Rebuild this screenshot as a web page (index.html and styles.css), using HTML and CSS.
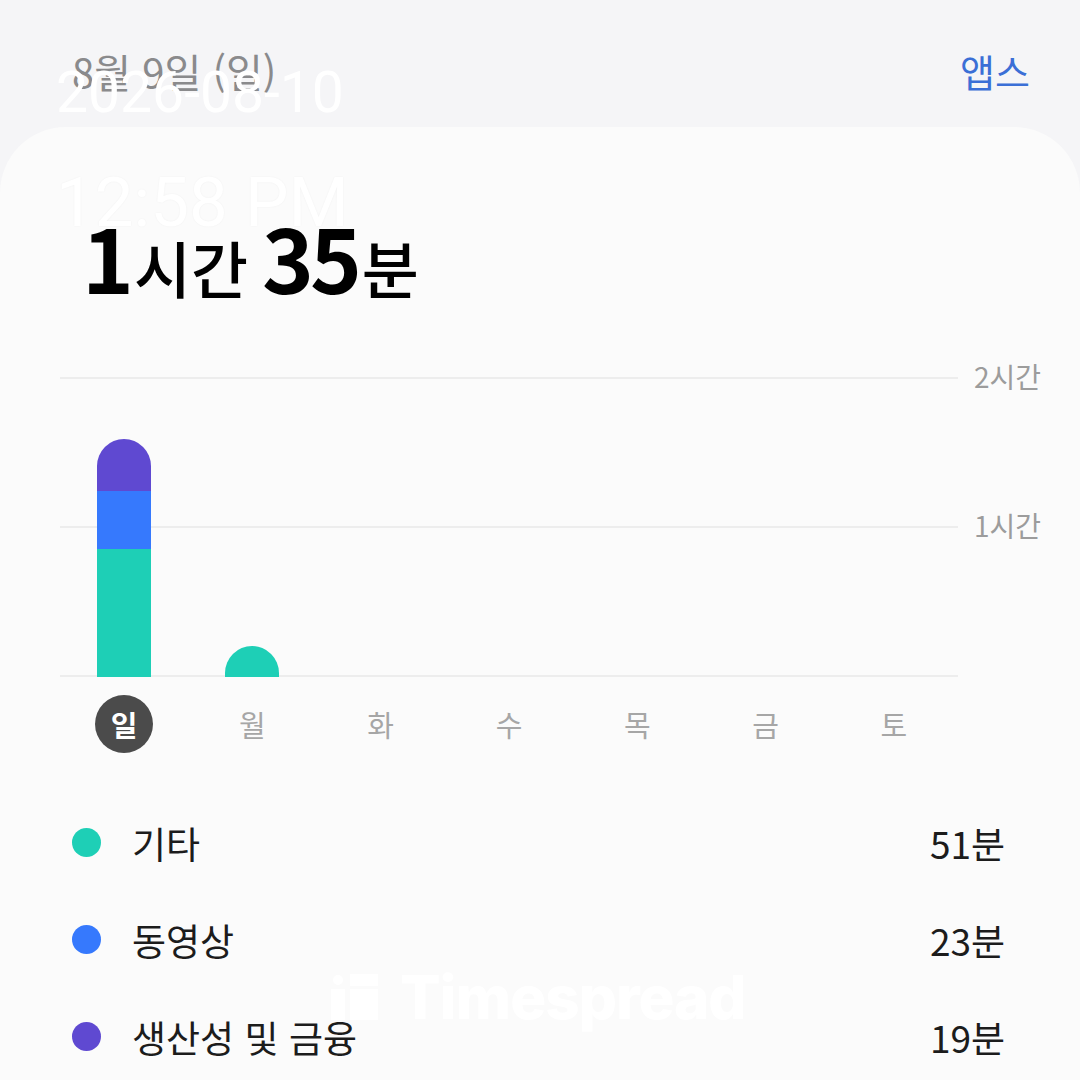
FILE: index.html
```html
<!DOCTYPE html>
<html lang="ko">
<head>
    <meta charset="UTF-8">
    <meta name="viewport" content="width=device-width, initial-scale=1.0">
    <title>디지털 웰빙 - 스크린 타임</title>
    <link rel="stylesheet" href="styles.css">
</head>
<body>
    <header class="top-bar">
        <span class="date">8월 9일 (일)</span>
        <a class="apps-link" href="#">앱스</a>
    </header>

    <main class="card">
        <h1 class="total">
            <span class="num">1</span><span class="unit">시간</span>
            <span class="num">35</span><span class="unit">분</span>
        </h1>

        <!-- 주간 차트 -->
        <div class="chart">
            <div class="plot">
                <div class="col">
                    <div class="bar">
                        <div class="seg seg-finance" style="height: 52px"></div>
                        <div class="seg seg-video" style="height: 58px"></div>
                        <div class="seg seg-etc" style="height: 128px"></div>
                    </div>
                </div>
                <div class="col">
                    <div class="bar">
                        <div class="seg seg-etc" style="height: 31px"></div>
                    </div>
                </div>
                <div class="col"></div>
                <div class="col"></div>
                <div class="col"></div>
                <div class="col"></div>
                <div class="col"></div>
            </div>
            <div class="axis">
                <span class="axis-label first">2시간</span>
                <span class="axis-label">1시간</span>
            </div>
        </div>

        <div class="days">
            <span class="day active">일</span>
            <span class="day">월</span>
            <span class="day">화</span>
            <span class="day">수</span>
            <span class="day">목</span>
            <span class="day">금</span>
            <span class="day">토</span>
        </div>

        <!-- 카테고리 목록 -->
        <ul class="legend">
            <li class="legend-row">
                <span class="dot seg-etc"></span>
                <span class="legend-name">기타</span>
                <span class="legend-time">51분</span>
            </li>
            <li class="legend-row">
                <span class="dot seg-video"></span>
                <span class="legend-name">동영상</span>
                <span class="legend-time">23분</span>
            </li>
            <li class="legend-row">
                <span class="dot seg-finance"></span>
                <span class="legend-name">생산성 및 금융</span>
                <span class="legend-time">19분</span>
            </li>
        </ul>
    </main>

    <!-- 스크린샷 워터마크 -->
    <div class="stamp stamp-date">2026-08-10</div>
    <div class="stamp stamp-time">12:58 PM</div>
    <div class="brand">
        <svg class="brand-icon" width="48" height="46" viewBox="0 0 48 46">
            <circle cx="8" cy="6" r="5" fill="#fff"/>
            <rect x="1" y="15" width="14" height="31" fill="#fff"/>
            <rect x="20" y="0" width="28" height="12" fill="#fff"/>
            <rect x="20" y="15" width="28" height="31" fill="#fff"/>
        </svg>
        <span class="brand-name">Timespread</span>
    </div>
</body>
</html>
```

FILE: styles.css
```css
body {
    margin: 0;
    width: 1080px;
    height: 1080px;
    overflow: hidden;
    position: relative;
    background-color: #f5f5f7;
    font-family: "Noto Sans CJK KR", "Noto Sans", sans-serif;
    color: #1a1a1a;
}

.top-bar {
    height: 127px;
    box-sizing: border-box;
    padding: 50px 50px 0 72px;
    display: flex;
    justify-content: space-between;
    font-size: 40px;
    line-height: 42px;
}

.date {
    color: #8a8a8c;
}

.apps-link {
    color: #3b6fd6;
    font-size: 38px;
    text-decoration: none;
}

.card {
    background-color: #fbfbfb;
    border-radius: 66px 66px 0 0;
    padding-top: 84px;
    height: 953px;
    box-sizing: border-box;
}

.total {
    margin: 0 0 0 82px;
    height: 90px;
    line-height: 90px;
    font-weight: 700;
    color: #000;
    display: flex;
    align-items: baseline;
}

.total .num {
    font-size: 88px;
    letter-spacing: -4px;
}

.total .unit {
    font-size: 62px;
    font-weight: 500;
    margin-left: 4px;
    margin-right: 14px;
}

.chart {
    display: flex;
    margin: 76px 0 0 60px;
}

.plot {
    width: 898px;
    height: 300px;
    display: grid;
    grid-template-columns: repeat(7, 1fr);
    align-items: end;
    background-image:
        linear-gradient(#ededed, #ededed),
        linear-gradient(#ededed, #ededed),
        linear-gradient(#ededed, #ededed);
    background-repeat: no-repeat;
    background-size: 100% 2px;
    background-position: top, center, bottom;
}

.col {
    display: flex;
    justify-content: center;
}

.bar {
    width: 54px;
    border-radius: 27px 27px 0 0;
    overflow: hidden;
    display: flex;
    flex-direction: column;
}

.seg-etc {
    background-color: #1ecfb6;
}

.seg-video {
    background-color: #3679fd;
}

.seg-finance {
    background-color: #5f49d1;
}

.axis {
    display: flex;
    flex-direction: column;
    padding-left: 16px;
}

.axis-label {
    font-size: 28px;
    line-height: 30px;
    color: #9c9c9c;
    margin-top: 119px;
}

.axis-label.first {
    margin-top: -16px;
}

.days {
    width: 898px;
    margin: 18px 0 0 60px;
    display: grid;
    grid-template-columns: repeat(7, 1fr);
    justify-items: center;
}

.day {
    width: 58px;
    height: 58px;
    line-height: 58px;
    text-align: center;
    font-size: 29px;
    color: #a6a6a6;
}

.day.active {
    background-color: #4b4b4b;
    border-radius: 50%;
    color: #fff;
    font-weight: 700;
}

.legend {
    list-style: none;
    margin: 41px 0 0;
    padding: 0;
}

.legend-row {
    height: 97px;
    display: flex;
    align-items: center;
    padding: 0 75px 0 72px;
    font-size: 37px;
}

.dot {
    width: 29px;
    height: 29px;
    border-radius: 50%;
    margin-right: 31px;
}

.legend-name {
    flex: 1;
    color: #1c1c1c;
}

.legend-time {
    color: #1c1c1c;
}

.stamp {
    position: absolute;
    left: 56px;
    font-family: Roboto, "Liberation Sans", sans-serif;
    color: #fff;
}

.stamp-date {
    top: 64px;
    font-size: 57px;
    line-height: 57px;
}

.stamp-time {
    top: 168px;
    font-size: 69px;
    line-height: 69px;
    text-shadow: 0 0 2px rgba(0, 0, 0, 0.05);
}

.brand {
    position: absolute;
    left: 330px;
    top: 974px;
    display: flex;
    align-items: flex-start;
    gap: 22px;
    color: #fff;
}

.brand-name {
    font-family: Inter, "Liberation Sans", sans-serif;
    font-weight: 800;
    font-size: 60px;
    line-height: 46px;
    letter-spacing: -1px;
}
```
